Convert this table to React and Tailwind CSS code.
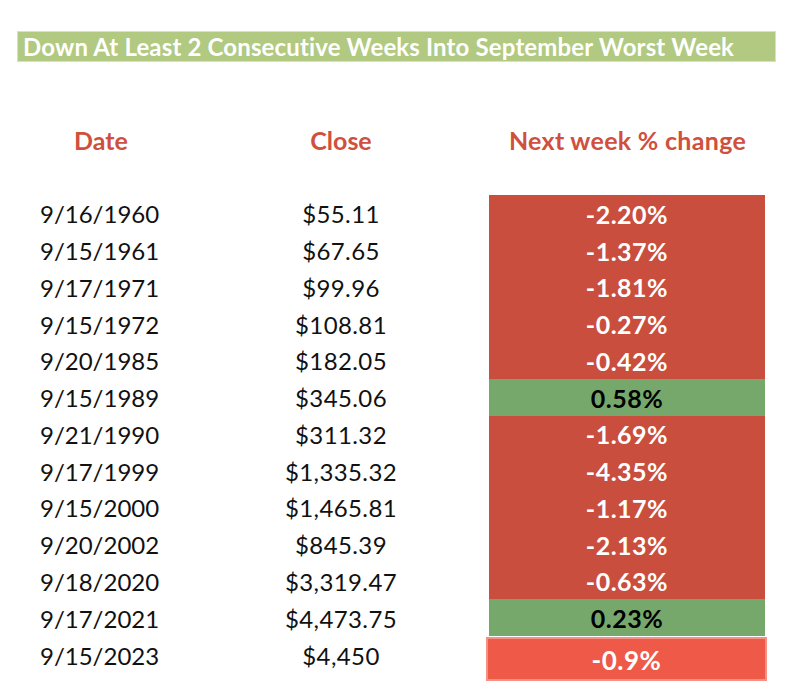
import React from "react";

const rows = [
  ["9/16/1960", "$55.11", "-2.20%", "r"],
  ["9/15/1961", "$67.65", "-1.37%", "r"],
  ["9/17/1971", "$99.96", "-1.81%", "r"],
  ["9/15/1972", "$108.81", "-0.27%", "r"],
  ["9/20/1985", "$182.05", "-0.42%", "r"],
  ["9/15/1989", "$345.06", "0.58%", "g"],
  ["9/21/1990", "$311.32", "-1.69%", "r"],
  ["9/17/1999", "$1,335.32", "-4.35%", "r"],
  ["9/15/2000", "$1,465.81", "-1.17%", "r"],
  ["9/20/2002", "$845.39", "-2.13%", "r"],
  ["9/18/2020", "$3,319.47", "-0.63%", "r"],
  ["9/17/2021", "$4,473.75", "0.23%", "g"],
];

export default function App() {
  return (
    <div
      className="w-[798px] h-[700px] bg-white relative overflow-hidden"
      style={{ fontFamily: "Lato, 'Liberation Sans', sans-serif" }}
    >
      <div className="pt-[31px] pl-[17px]">
        <div className="w-[759px] h-[31px] bg-[#b1c980] border border-[#d6e3c0] flex items-center pl-[5px]">
          <span className="text-white font-bold text-[24px] leading-none tracking-[0.15px]">
            Down At Least 2 Consecutive Weeks Into September Worst Week
          </span>
        </div>
      </div>

      <div className="flex mt-[62px] h-[32px] items-center text-[#d0503d] font-bold text-[25px] leading-none">
        <div className="w-[202px] text-center">Date</div>
        <div className="w-[200px] ml-[39px] text-center">Close</div>
        <div className="w-[275px] ml-[49px] text-center tracking-[0.3px]">Next week % change</div>
      </div>

      <div className="mt-[38px] pt-[1px]">
        {rows.map(([d, c, p, t]) => (
          <div key={d} className="flex h-[36.75px] items-center text-[24px] leading-none">
            <div className="w-[241px] pl-[40px] text-[#111] pt-[2px]">{d}</div>
            <div className="w-[200px] text-center text-[#111] pt-[2px] tracking-[0.4px]">{c}</div>
            <div
              className={
                "ml-[48px] w-[276px] h-full flex items-center justify-center font-bold text-[25px] tracking-[0.5px] pt-[2px] " +
                (t === "r" ? "bg-[#c94e3d] text-white" : "bg-[#77a86b] text-black")
              }
            >
              {p}
            </div>
          </div>
        ))}
        <div className="flex h-[45px] items-center text-[24px] leading-none">
          <div className="w-[241px] pl-[40px] text-[#111] -mt-[6px]">9/15/2023</div>
          <div className="w-[200px] text-center text-[#111] -mt-[6px] tracking-[0.4px]">$4,450</div>
          <div className="ml-[45px] w-[281px] h-[44px] flex items-center justify-center font-bold bg-[#ee5a47] border-2 border-[#f39184] text-white text-[26px] tracking-[0.5px] pt-[2px]">
            -0.9%
          </div>
        </div>
      </div>
    </div>
  );
}
